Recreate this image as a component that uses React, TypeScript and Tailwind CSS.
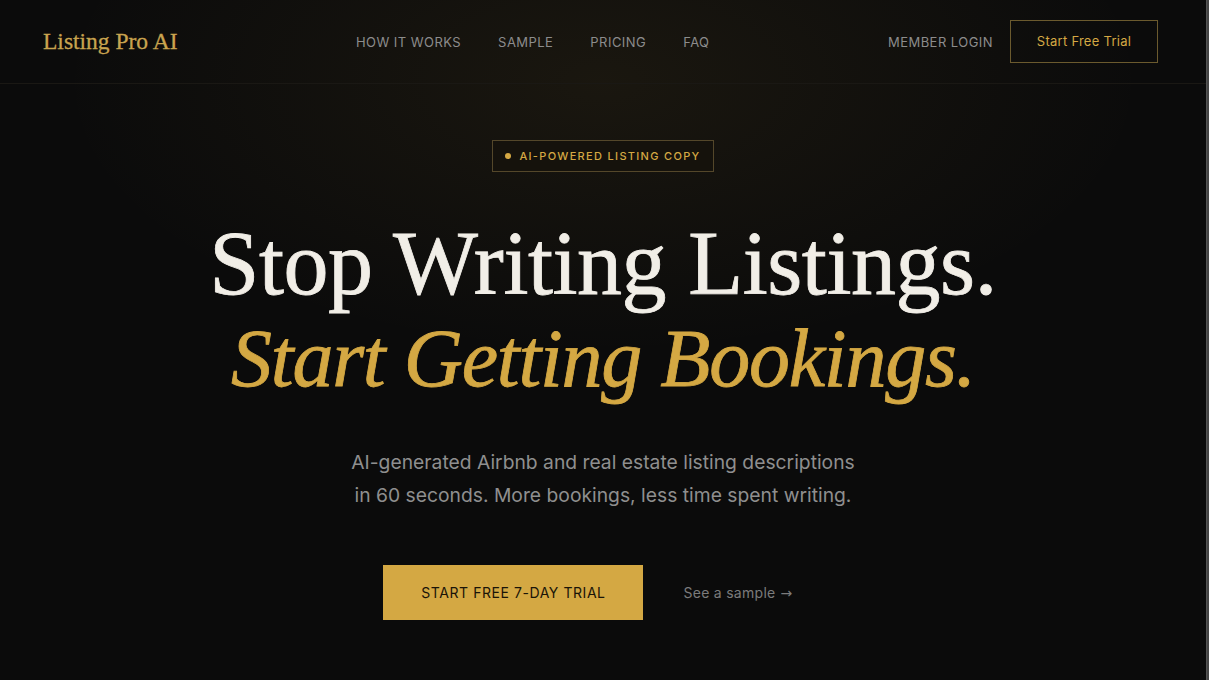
const NAV_LINKS = ["HOW IT WORKS", "SAMPLE", "PRICING", "FAQ"];

const serif = "font-['Liberation_Serif','DejaVu_Serif',serif]";
const sans = "font-['Inter','Liberation_Sans',sans-serif]";

export default function App() {
  return (
    <div className={`flex h-screen bg-[#0b0b0b] ${sans}`}>
      <main className="relative min-w-0 flex-1 overflow-hidden bg-[radial-gradient(ellipse_45%_40%_at_50%_12%,rgba(212,168,67,0.075),transparent)]">
        {/* Nav */}
        <header className="flex h-[84px] items-center justify-between border-b border-[#1a1814] pl-[43px] pr-12">
          <a className={`${serif} text-[23.5px] text-[#c9a44f] [-webkit-text-stroke:0.3px_#c9a44f]`}>Listing Pro AI</a>
          <nav className="flex items-center gap-[37px] pt-[2px]">
            {NAV_LINKS.map((l) => (
              <a key={l} className="text-[13px] tracking-[0.035em] text-[#8c8c8c]">
                {l}
              </a>
            ))}
          </nav>
          <div className="flex items-center gap-[17px]">
            <a className="pt-[2px] text-[13px] tracking-[0.035em] text-[#8c8c8c]">MEMBER LOGIN</a>
            <button className="flex h-[43px] w-[148px] items-center justify-center border border-[#6b5a2e] text-[13px] tracking-[0.02em] text-[#d4a843]">
              Start Free Trial
            </button>
          </div>
        </header>

        {/* Hero */}
        <section className="flex flex-col items-center pt-14">
          <div className="flex h-8 w-[222px] items-center justify-center gap-2 border border-[#54472a] bg-[#15120c]">
            <span className="h-[6px] w-[6px] rounded-full bg-[#d4a843]" />
            <span className="text-[11px] font-medium tracking-[0.12em] text-[#d4a843]">AI-POWERED LISTING COPY</span>
          </div>

          <h1 className={`${serif} mt-11 flex flex-col items-center text-center`}>
            <span className="text-[90px] leading-[95px] text-[#f1eee7] tracking-[-0.005em] [-webkit-text-stroke:0.8px_#f1eee7]">
              Stop Writing Listings.
            </span>
            <span className="text-[82px] leading-[95px] italic text-[#d4a843] tracking-[-0.015em] [-webkit-text-stroke:0.8px_#d4a843]">
              Start Getting Bookings.
            </span>
          </h1>

          <p className="mt-10 text-center text-[19.3px] leading-[33px] text-[#8f8f8f]">
            AI-generated Airbnb and real estate listing descriptions
            <br />
            in 60 seconds. More bookings, less time spent writing.
          </p>

          <div className="mt-[53px] flex items-center gap-10 pr-[30px]">
            <button className="h-[55px] w-[260px] bg-[#d4a843] text-[14px] tracking-[0.04em] text-[#1a1408]">
              START FREE 7-DAY TRIAL
            </button>
            <a className="flex items-center gap-[5px] text-[14px] tracking-[0.02em] text-[#7b7b7b]">
              See a sample
              <span className="font-['DejaVu_Sans',sans-serif] text-[14px] leading-none">→</span>
            </a>
          </div>
        </section>
      </main>
      {/* scrollbar strip */}
      <div className="w-[3px] shrink-0 border-l border-[#555] bg-[#454545]" />
    </div>
  );
}
